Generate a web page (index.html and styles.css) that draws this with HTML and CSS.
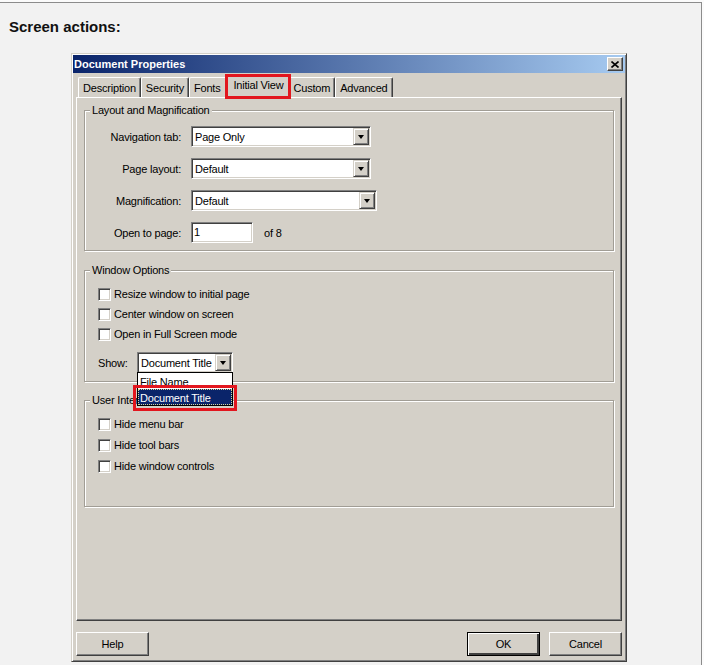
FILE: index.html
```html
<!DOCTYPE html>
<html lang="en">
  <head>
    <meta charset="UTF-8" />
    <meta name="viewport" content="width=device-width, initial-scale=1.0" />
    <title>Screen actions</title>
    <link rel="stylesheet" href="styles.css">
  </head>
  <body>
    <div class="page">
      <h1 class="heading">Screen actions:</h1>

      <div class="dialog">
        <div class="titlebar">
          <span class="title">Document Properties</span>
          <span class="close-btn">
            <svg width="8" height="7" viewBox="0 0 8 7">
              <path d="M0.5 0.5 L7.5 6.5 M7.5 0.5 L0.5 6.5" stroke="#000" stroke-width="1.6" fill="none" />
            </svg>
          </span>
        </div>

        <div class="tabs">
          <span class="tab">Description</span>
          <span class="tab">Security</span>
          <span class="tab tab-fonts">Fonts</span>
          <span class="tab tab-active">Initial View<span class="mark mark-tab"></span></span>
          <span class="tab">Custom</span>
          <span class="tab">Advanced</span>
        </div>

        <div class="panel">
          <fieldset class="group group-layout">
            <legend>Layout and Magnification</legend>
            <div class="form-grid">
              <label>Navigation tab:</label>
              <div class="combo combo-nav">
                <span class="combo-text">Page Only</span>
                <span class="combo-btn"><i class="arrow"></i></span>
              </div>

              <label>Page layout:</label>
              <div class="combo combo-nav">
                <span class="combo-text">Default</span>
                <span class="combo-btn"><i class="arrow"></i></span>
              </div>

              <label>Magnification:</label>
              <div class="combo combo-mag">
                <span class="combo-text">Default</span>
                <span class="combo-btn"><i class="arrow"></i></span>
              </div>

              <label>Open to page:</label>
              <div class="page-row">
                <span class="textbox">1</span>
                <span>of 8</span>
              </div>
            </div>
          </fieldset>

          <fieldset class="group group-window">
            <legend>Window Options</legend>
            <div class="check-row"><span class="checkbox"></span>Resize window to initial page</div>
            <div class="check-row"><span class="checkbox"></span>Center window on screen</div>
            <div class="check-row"><span class="checkbox"></span>Open in Full Screen mode</div>
            <div class="show-row">
              <span class="show-label">Show:</span>
              <div class="combo combo-show">
                <span class="combo-text">Document Title</span>
                <span class="combo-btn"><i class="arrow"></i></span>
                <div class="dropdown">
                  <div class="dropdown-item">File Name</div>
                  <div class="dropdown-item selected">Document Title<span class="mark mark-item"></span></div>
                </div>
              </div>
            </div>
          </fieldset>

          <fieldset class="group group-ui">
            <legend>User Interface Options</legend>
            <div class="check-row"><span class="checkbox"></span>Hide menu bar</div>
            <div class="check-row"><span class="checkbox"></span>Hide tool bars</div>
            <div class="check-row"><span class="checkbox"></span>Hide window controls</div>
          </fieldset>
        </div>

        <div class="buttons">
          <span class="btn">Help</span>
          <span class="btn btn-default">OK</span>
          <span class="btn">Cancel</span>
        </div>
      </div>
    </div>
  </body>
</html>
```

FILE: styles.css
```css
body {
  margin: 0;
  background: #fbfbfb;
  font-family: "Liberation Sans", Arial, sans-serif;
  font-size: 11px;
  color: #000;
}
.page {
  margin-top: 2px;
  width: 701px;
  height: 663px;
  border-top: 1px solid #8c8c8c;
  border-right: 1px solid #8c8c8c;
  background: #f2f2f2;
}
.heading {
  margin: 0;
  padding: 15px 0 0 9px;
  font-size: 15px;
  line-height: 17px;
  font-weight: bold;
  color: #111;
}

/* dialog frame */
.dialog {
  width: 556px;
  box-sizing: border-box;
  margin: 18px 0 0 71px;
  padding: 1px 4px 5px;
  background: #d4d0c8;
  letter-spacing: -0.2px;
  border: 1px solid;
  border-color: #d4d0c8 #404040 #404040 #d4d0c8;
  box-shadow: inset 1px 1px #fff, inset -1px -1px #808080;
}
.titlebar {
  height: 18px;
  margin: 0 -3px;
  padding: 0 2px 0 1px;
  display: flex;
  align-items: center;
  justify-content: space-between;
  background: linear-gradient(to right, #0a246a, #a6caf0);
  letter-spacing: 0;
}
.title {
  color: #fff;
  font-weight: bold;
}
.close-btn {
  width: 16px;
  height: 14px;
  box-sizing: border-box;
  display: flex;
  align-items: center;
  justify-content: center;
  background: #d4d0c8;
  border: 1px solid;
  border-color: #fff #404040 #404040 #fff;
  box-shadow: inset -1px -1px #808080;
}

/* tabs */
.tabs {
  margin-top: 2px;
  height: 22px;
  padding-left: 2px;
  display: flex;
  align-items: flex-end;
  position: relative;
  z-index: 1;
}
.tab {
  height: 20px;
  box-sizing: border-box;
  padding: 1px 4px 0;
  line-height: 19px;
  background: #d4d0c8;
  border: 1px solid;
  border-color: #fff #404040 transparent #fff;
  border-bottom: none;
  border-radius: 2px 2px 0 0;
  box-shadow: inset -1px 0 #808080;
}
.tab-fonts {
  padding: 1px 7px 0 4px;
}
.tab-active {
  height: 23px;
  margin: 0 -2px -1px;
  padding: 0 6px 3px;
  position: relative;
  z-index: 2;
}
.mark {
  position: absolute;
  border: 3px solid #e2161e;
  pointer-events: none;
}
.mark-tab {
  top: -2px;
  left: -2px;
  right: -2px;
  bottom: -1px;
}

/* panel */
.panel {
  height: 524px;
  box-sizing: border-box;
  padding: 6px 7px 0;
  border: 1px solid;
  border-color: #fff #404040 #404040 #fff;
  box-shadow: inset -1px -1px #808080;
}
.group {
  margin: 0;
  padding: 9px 0 7px;
  min-width: 0;
  border: 1px solid #a19d95;
  box-shadow: 1px 1px 0 #fff, inset 1px 1px 0 #fff;
}
.group legend {
  margin-left: 5px;
  padding: 0 2px;
  line-height: 13px;
  background: #d4d0c8;
}
.group-window {
  margin-top: 13px;
  padding: 7px 0 8px;
}
.group-ui {
  margin-top: 12px;
  padding: 7px 0 30px;
}

.form-grid {
  display: grid;
  grid-template-columns: 96px auto;
  column-gap: 10px;
  row-gap: 11px;
  align-items: center;
  justify-items: start;
}
.form-grid label {
  justify-self: end;
}

/* combo boxes */
.combo {
  height: 21px;
  box-sizing: border-box;
  padding: 1px;
  display: flex;
  align-items: center;
  position: relative;
  background: #fff;
  border: 1px solid;
  border-color: #808080 #fff #fff #808080;
  box-shadow: inset 1px 1px #404040, inset -1px -1px #d4d0c8;
}
.combo-nav {
  width: 180px;
}
.combo-mag {
  width: 186px;
}
.combo-show {
  width: 96px;
}
.combo-text {
  flex: 1;
  padding-left: 2px;
  white-space: nowrap;
}
.combo-btn {
  width: 16px;
  height: 17px;
  box-sizing: border-box;
  display: flex;
  align-items: center;
  justify-content: center;
  background: #d4d0c8;
  border: 1px solid;
  border-color: #d4d0c8 #404040 #404040 #d4d0c8;
  box-shadow: inset 1px 1px #fff, inset -1px -1px #808080;
}
.arrow {
  width: 0;
  height: 0;
  border-top: 4px solid #000;
  border-left: 3.5px solid transparent;
  border-right: 3.5px solid transparent;
}

.page-row {
  display: flex;
  align-items: center;
  gap: 11px;
}
.textbox {
  width: 62px;
  height: 21px;
  box-sizing: border-box;
  padding-left: 2px;
  line-height: 19px;
  background: #fff;
  border: 1px solid;
  border-color: #808080 #fff #fff #808080;
  box-shadow: inset 1px 1px #404040, inset -1px -1px #d4d0c8;
}

/* checkboxes */
.check-row {
  height: 20px;
  padding-left: 13px;
  display: flex;
  align-items: center;
  gap: 3px;
}
.group-ui .check-row + .check-row {
  margin-top: 1px;
}
.checkbox {
  width: 13px;
  height: 13px;
  box-sizing: border-box;
  background: #fff;
  border: 1px solid;
  border-color: #808080 #fff #fff #808080;
  box-shadow: inset 1px 1px #404040, inset -1px -1px #d4d0c8;
}

.show-row {
  margin-top: 8px;
  padding-left: 13px;
  display: flex;
  align-items: center;
}
.show-label {
  width: 39px;
}

/* open drop-down list */
.dropdown {
  position: absolute;
  top: 100%;
  left: -1px;
  width: 96px;
  box-sizing: border-box;
  background: #fff;
  border: 1px solid #000;
  z-index: 5;
}
.dropdown-item {
  height: 16px;
  line-height: 18px;
  padding-left: 2px;
  position: relative;
  white-space: nowrap;
}
.dropdown-item.selected {
  background: #0a246a;
  color: #fff;
  outline: 1px dotted #d8d49a;
  outline-offset: -1px;
}
.mark-item {
  top: -4px;
  left: -5px;
  right: -5px;
  bottom: -6px;
}

/* bottom buttons */
.buttons {
  margin-top: 11px;
  display: flex;
  gap: 9px;
}
.btn {
  width: 73px;
  height: 24px;
  box-sizing: border-box;
  display: flex;
  align-items: center;
  justify-content: center;
  background: #d4d0c8;
  border: 1px solid;
  border-color: #fff #404040 #404040 #fff;
  box-shadow: inset -1px -1px #808080;
}
.btn-default {
  margin-left: auto;
  border-color: #000;
  box-shadow: inset 1px 1px #fff, inset -2px -2px #404040, inset -1px -1px #808080;
}
```
